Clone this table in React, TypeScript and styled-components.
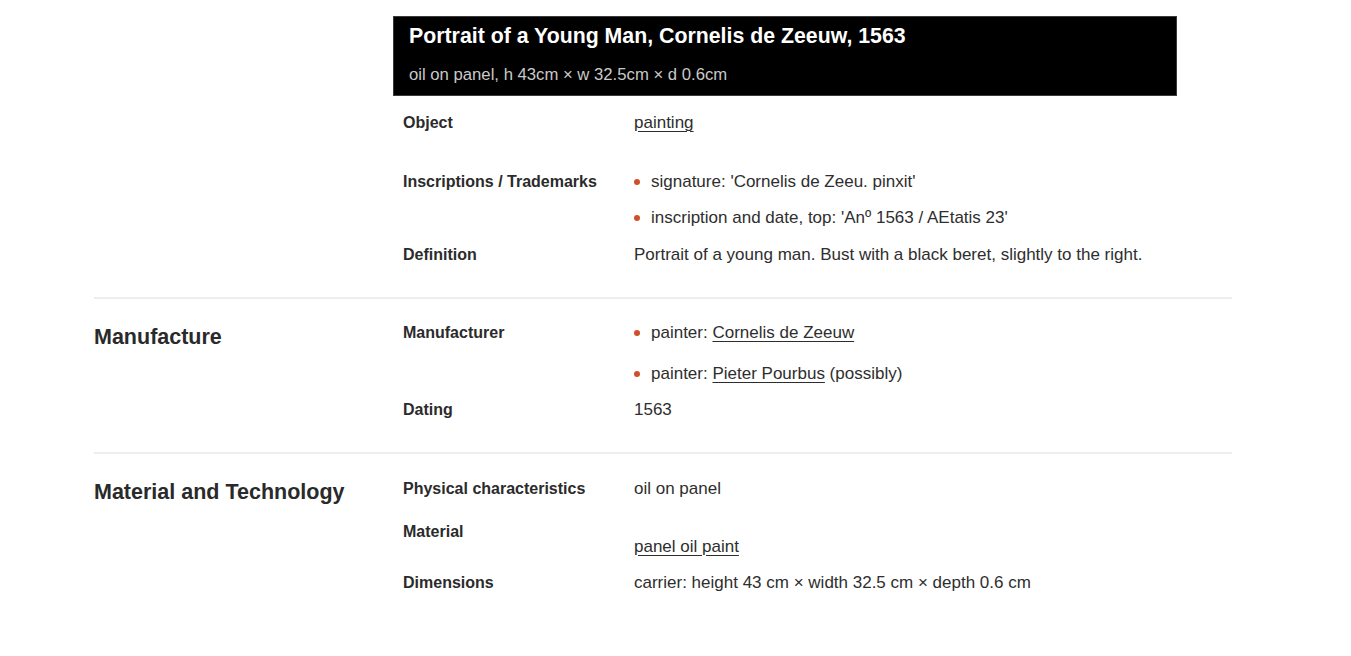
// CORE MODULES
import React from 'react'
import styled, { createGlobalStyle } from 'styled-components'


type Entry = {
    label: string
    top: number
    valueTop?: number
    items: React.ReactNode[]
    bullets?: boolean
    itemGaps?: number[]
}

const GlobalStyle = createGlobalStyle`
body {
    margin: 0;
    background: #fff;
    font-family: "Liberation Sans", Arial, sans-serif;
    color: #2e2e2e;
}
`

const Link: React.FC<{ children: React.ReactNode }> = ({ children }) => (
    <Anchor href="#" onClick={e => e.preventDefault()}>{children}</Anchor>
)

const identification: Entry[] = [
    { label: 'Object', top: 15, items: [<Link>painting</Link>] },
    {
        label: 'Inscriptions / Trademarks',
        top: 35,
        bullets: true,
        itemGaps: [0, 12],
        items: [
            "signature: 'Cornelis de Zeeu. pinxit'",
            "inscription and date, top: 'Anº 1563 / AEtatis 23'",
        ],
    },
    {
        label: 'Definition',
        top: 13,
        items: ['Portrait of a young man. Bust with a black beret, slightly to the right.'],
    },
]

const manufacture: Entry[] = [
    {
        label: 'Manufacturer',
        top: 22,
        bullets: true,
        itemGaps: [0, 17],
        items: [
            <>painter: <Link>Cornelis de Zeeuw</Link></>,
            <>painter: <Link>Pieter Pourbus</Link> (possibly)</>,
        ],
    },
    { label: 'Dating', top: 12, items: ['1563'] },
]

const material: Entry[] = [
    { label: 'Physical characteristics', top: 23, items: ['oil on panel'] },
    { label: 'Material', top: 19, valueTop: 15, items: [<Link>panel oil paint</Link>] },
    {
        label: 'Dimensions',
        top: 12,
        items: ['carrier: height 43 cm × width 32.5 cm × depth 0.6 cm'],
    },
]

const Rows: React.FC<{ entries: Entry[] }> = ({ entries }) => (
    <>
        {entries.map(entry => (
            <Row key={entry.label} $top={entry.top}>
                <Label>{entry.label}</Label>
                <Value $top={entry.valueTop || 0}>
                    {entry.items.map((item, i) => (
                        <Item
                            key={i}
                            $bullet={!!entry.bullets}
                            $top={entry.itemGaps ? entry.itemGaps[i] : 0}
                        >
                            {item}
                        </Item>
                    ))}
                </Value>
            </Row>
        ))}
    </>
)

const App: React.FC = () => {
    return (
        <Page>
            <GlobalStyle />
            <Section>
                <Heading $top={0} />
                <Body>
                    <TitleBox>
                        <Title>Portrait of a Young Man, Cornelis de Zeeuw, 1563</Title>
                        <Subtitle>oil on panel, h 43cm × w 32.5cm × d 0.6cm</Subtitle>
                    </TitleBox>
                    <Rows entries={identification} />
                </Body>
            </Section>
            <Section>
                <Heading $top={24}>Manufacture</Heading>
                <Body>
                    <Rows entries={manufacture} />
                </Body>
            </Section>
            <Section $last>
                <Heading $top={24}>Material and Technology</Heading>
                <Body>
                    <Rows entries={material} />
                </Body>
            </Section>
        </Page>
    )
}

const Page = styled.main`
padding-left: 94px;
width: 1138px;
`

const Section = styled.section<{ $last?: boolean }>`
display: grid;
grid-template-columns: 299px 1fr;
padding-bottom: 30px;
border-bottom: ${props => props.$last ? 'none' : '2px solid #eeeeee'};
`

const Heading = styled.h2<{ $top: number }>`
margin: ${props => props.$top}px 0 0;
font-size: 21.5px;
line-height: 28px;
font-weight: 700;
color: #2a2a2a;
`

const Body = styled.div`
display: flex;
flex-direction: column;
`

const TitleBox = styled.div`
margin-top: 16px;
width: 784px;
box-sizing: border-box;
background: #000;
border: 1px solid #3a3a3a;
padding: 6px 15px 9px;
`

const Title = styled.h1`
margin: 0;
font-size: 21.3px;
line-height: 26px;
font-weight: 700;
color: #fff;
`

const Subtitle = styled.p`
margin: 15px 0 0;
font-size: 16.7px;
line-height: 22px;
color: #c9c9c9;
`

const Row = styled.div<{ $top: number }>`
display: grid;
grid-template-columns: 231px 1fr;
padding-left: 10px;
margin-top: ${props => props.$top}px;
`

const Label = styled.div`
font-size: 16px;
line-height: 24px;
font-weight: 700;
color: #2b2b2b;
`

const Value = styled.ul<{ $top: number }>`
list-style: none;
margin: 0;
padding: ${props => props.$top}px 0 0;
`

const Item = styled.li<{ $bullet: boolean; $top: number }>`
position: relative;
margin-top: ${props => props.$top}px;
padding-left: ${props => props.$bullet ? '17px' : '0'};
font-size: 17px;
line-height: 24px;
color: #2e2e2e;

&::before {
    content: '';
    display: ${props => props.$bullet ? 'block' : 'none'};
    position: absolute;
    left: 0;
    top: 9px;
    width: 6px;
    height: 6px;
    border-radius: 50%;
    background: #d24e2a;
}
`

const Anchor = styled.a`
color: #2e2e2e;
text-decoration: underline;
text-decoration-thickness: 1px;
text-underline-offset: 3px;
`

export default App
